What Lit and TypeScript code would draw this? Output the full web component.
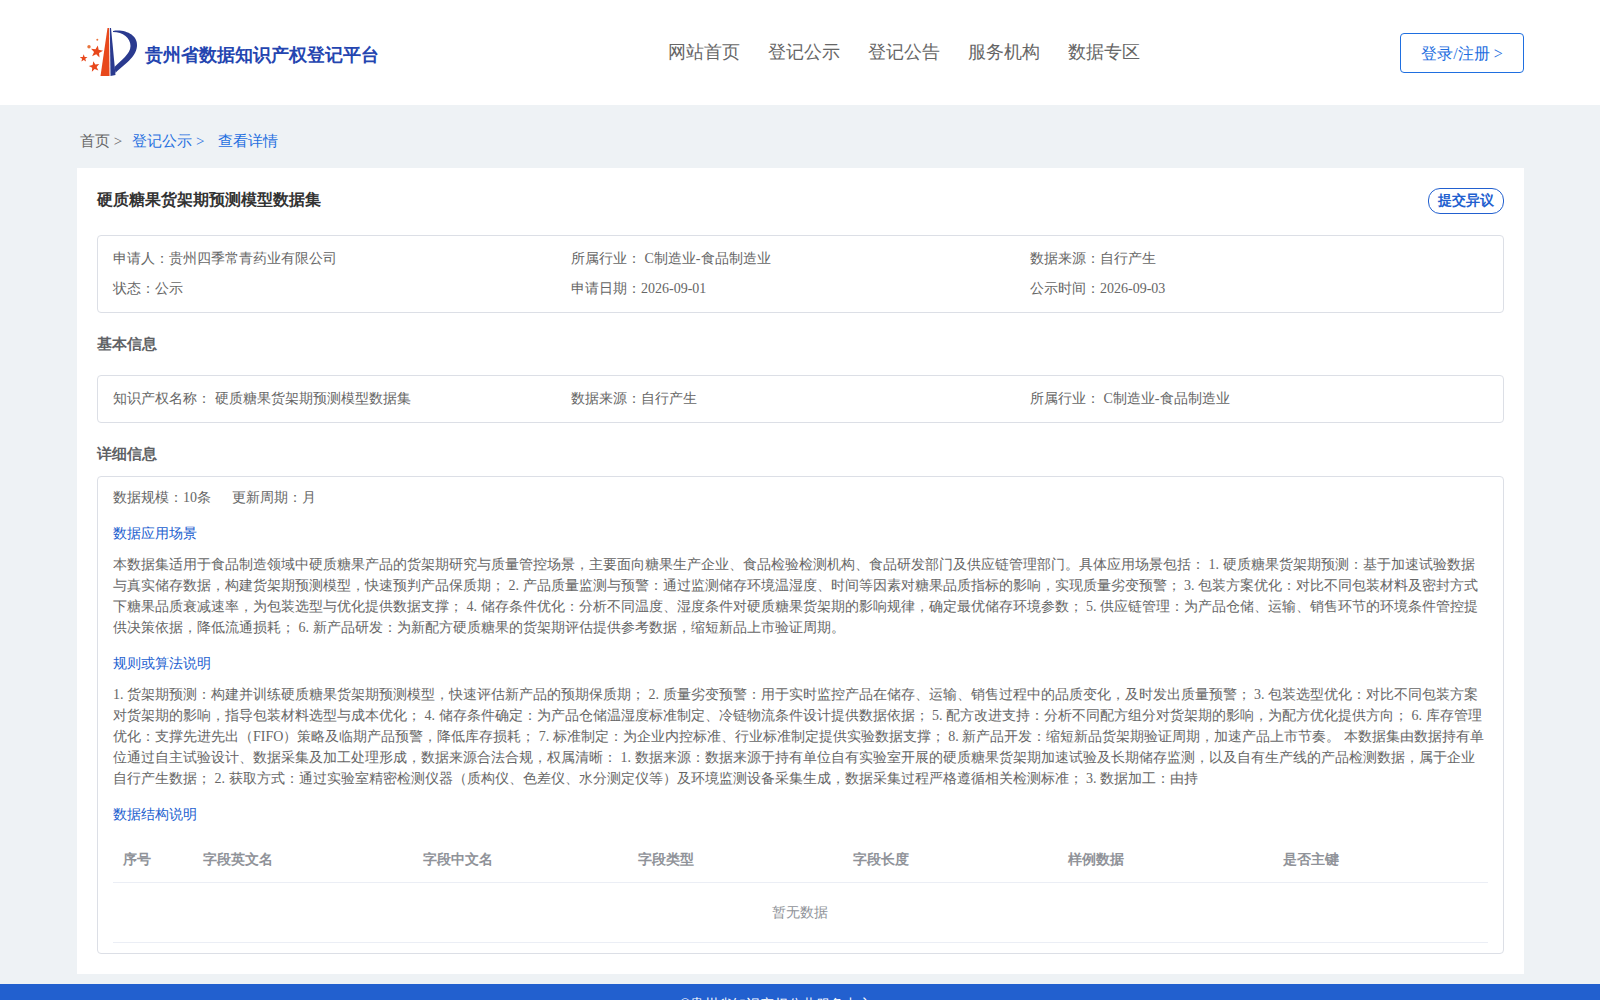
import { LitElement, html, css, svg } from "lit";
import { customElement } from "lit/decorators.js";

const P1 = "本数据集适用于食品制造领域中硬质糖果产品的货架期研究与质量管控场景，主要面向糖果生产企业、食品检验检测机构、食品研发部门及供应链管理部门。具体应用场景包括： 1. 硬质糖果货架期预测：基于加速试验数据与真实储存数据，构建货架期预测模型，快速预判产品保质期； 2. 产品质量监测与预警：通过监测储存环境温湿度、时间等因素对糖果品质指标的影响，实现质量劣变预警； 3. 包装方案优化：对比不同包装材料及密封方式下糖果品质衰减速率，为包装选型与优化提供数据支撑； 4. 储存条件优化：分析不同温度、湿度条件对硬质糖果货架期的影响规律，确定最优储存环境参数； 5. 供应链管理：为产品仓储、运输、销售环节的环境条件管控提供决策依据，降低流通损耗； 6. 新产品研发：为新配方硬质糖果的货架期评估提供参考数据，缩短新品上市验证周期。";
const P2 = "1. 货架期预测：构建并训练硬质糖果货架期预测模型，快速评估新产品的预期保质期； 2. 质量劣变预警：用于实时监控产品在储存、运输、销售过程中的品质变化，及时发出质量预警； 3. 包装选型优化：对比不同包装方案对货架期的影响，指导包装材料选型与成本优化； 4. 储存条件确定：为产品仓储温湿度标准制定、冷链物流条件设计提供数据依据； 5. 配方改进支持：分析不同配方组分对货架期的影响，为配方优化提供方向； 6. 库存管理优化：支撑先进先出（FIFO）策略及临期产品预警，降低库存损耗； 7. 标准制定：为企业内控标准、行业标准制定提供实验数据支撑； 8. 新产品开发：缩短新品货架期验证周期，加速产品上市节奏。 本数据集由数据持有单位通过自主试验设计、数据采集及加工处理形成，数据来源合法合规，权属清晰： 1. 数据来源：数据来源于持有单位自有实验室开展的硬质糖果货架期加速试验及长期储存监测，以及自有生产线的产品检测数据，属于企业自行产生数据； 2. 获取方式：通过实验室精密检测仪器（质构仪、色差仪、水分测定仪等）及环境监测设备采集生成，数据采集过程严格遵循相关检测标准； 3. 数据加工：由持";

const COLS = ["序号", "字段英文名", "字段中文名", "字段类型", "字段长度", "样例数据", "是否主键"];

function star(cx: number, cy: number, r: number, rot: number) {
  const pts: string[] = [];
  for (let i = 0; i < 10; i++) {
    const rad = i % 2 === 0 ? r : r * 0.42;
    const a = ((-90 + rot + i * 36) * Math.PI) / 180;
    pts.push(`${(cx + rad * Math.cos(a)).toFixed(2)},${(cy + rad * Math.sin(a)).toFixed(2)}`);
  }
  return svg`<polygon points=${pts.join(" ")} fill="#e8481c"></polygon>`;
}

@customElement("app-root")
export class AppRoot extends LitElement {
  static styles = css`
    :host {
      display: block;
      height: 1000px;
      overflow: hidden;
      background: #eef2f5;
      font-family: "Liberation Serif", serif;
      font-size: 14px;
      color: #666;
    }
    .top {
      height: 105px;
      background: #fff;
      display: grid;
      grid-template-columns: 1fr auto 1fr;
      align-items: center;
      padding: 0 76px 0 80px;
    }
    .brand { display: flex; align-items: center; gap: 5px; font-size: 18px; font-weight: 700; color: #2445b0; }
    .brand svg { display: block; }
    .brand span { padding-top: 5px; }
    .nav { display: flex; gap: 28px; font-size: 18px; color: #666; padding-left: 204px; padding-bottom: 2px; }
    .login {
      justify-self: end;
      width: 124px; height: 40px; box-sizing: border-box;
      border: 1px solid #1f6fe0; border-radius: 4px;
      color: #1f6fe0; font-size: 16px; padding-top: 4px;
      display: flex; align-items: center; justify-content: center;
    }
    .crumbs { height: 63px; padding: 10px 80px 0; display: flex; align-items: center; gap: 10px; font-size: 15px; box-sizing: border-box; }
    .crumbs .blue { color: #1f6fe0; }
    .crumbs .last { margin-left: 4px; }
    .card { margin: 0 76px 0 77px; background: #fff; padding: 20px 20px 0; height: 806px; box-sizing: border-box; }
    .head { display: flex; justify-content: space-between; align-items: flex-start; height: 47px; }
    .title { font-size: 16px; font-weight: 700; color: #333; line-height: 23px; }
    .object {
      box-sizing: border-box; width: 76px; height: 26px;
      border: 1px solid #2260cf; border-radius: 12px;
      font-size: 14px; font-weight: 700; color: #2260cf;
      display: flex; align-items: center; justify-content: center;
    }
    .box { border: 1px solid #dcdfe6; border-radius: 4px; box-sizing: border-box; }
    .grid { display: grid; grid-template-columns: 458px 459px 458px; padding: 12px 15px; row-gap: 8px; line-height: 22px; }
    .sec { font-size: 15px; font-weight: 700; color: #606266; display: flex; align-items: center; }
    .sec1 { height: 62px; }
    .sec2 { height: 53px; padding-top: 9px; box-sizing: border-box; }
    .detail { height: 478px; padding: 0 15px; overflow: hidden; }
    .meta { display: flex; gap: 21px; height: 41px; line-height: 41px; margin-bottom: 4px; }
    .sub { color: #2260cf; line-height: 24px; margin: 0; }
    .para { line-height: 21px; margin: 8px 0 0; }
    .gap { margin-top: 14px; }
    .table { margin-top: 9px; }
    .thead { display: grid; grid-template-columns: 79.5px 220px 215px 215px 215px 215px 1fr; height: 47px; padding-top: 1px; align-items: center; border-bottom: 1px solid #ebeef5; font-weight: 700; color: #909399; box-sizing: border-box; }
    .thead span { padding-left: 10px; }
    .empty { height: 60px; padding-right: 2px; display: flex; align-items: center; justify-content: center; color: #909399; border-bottom: 1px solid #ebeef5; box-sizing: border-box; }
    .foot { margin-top: 10px; height: 40px; background: #2260cf; color: #fff; text-align: center; font-size: 14px; padding: 12px 48px 0 0; box-sizing: border-box; }
  `;

  render() {
    return html`
      <div class="top">
        <div class="brand">
          <svg width="60" height="52" viewBox="0 0 60 52">
            <path d="M27.5 1 L29 1 L29.5 49 L20.5 49 Z" fill="#e8481c"/>
            <path d="M29.8 1 L31 1 L35.5 48 L30.5 49 Z" fill="#2a3a8f"/>
            <path d="M33 4 C45 2 58 8 57 19 C56 31 44 37 35.5 46 L34.5 40 C41 33 50.5 27 50.5 19 C50.5 11 43 5 33 5 Z" fill="#2a3a8f"/>
            ${star(16.7, 24.7, 6.4, 10)}
            ${star(14.3, 39.7, 5.6, -10)}
            ${star(3.7, 31.3, 4, 0)}
            <circle cx="9" cy="19.7" r="1.7" fill="#e8743c"/>
            <circle cx="17.3" cy="12.7" r="1" fill="#e8743c"/>
          </svg>
          <span>贵州省数据知识产权登记平台</span>
        </div>
        <div class="nav">
          <span>网站首页</span><span>登记公示</span><span>登记公告</span><span>服务机构</span><span>数据专区</span>
        </div>
        <div class="login">登录/注册 &gt;</div>
      </div>
      <div class="crumbs">
        <span>首页 &gt;</span><span class="blue">登记公示 &gt;</span><span class="blue last">查看详情</span>
      </div>
      <div class="card">
        <div class="head">
          <div class="title">硬质糖果货架期预测模型数据集</div>
          <div class="object">提交异议</div>
        </div>
        <div class="box grid">
          <span>申请人：贵州四季常青药业有限公司</span><span>所属行业： C制造业-食品制造业</span><span>数据来源：自行产生</span>
          <span>状态：公示</span><span>申请日期：2026-09-01</span><span>公示时间：2026-09-03</span>
        </div>
        <div class="sec sec1">基本信息</div>
        <div class="box grid">
          <span>知识产权名称： 硬质糖果货架期预测模型数据集</span><span>数据来源：自行产生</span><span>所属行业： C制造业-食品制造业</span>
        </div>
        <div class="sec sec2">详细信息</div>
        <div class="box detail">
          <div class="meta"><span>数据规模：10条</span><span>更新周期：月</span></div>
          <p class="sub">数据应用场景</p>
          <p class="para">${P1}</p>
          <p class="sub gap">规则或算法说明</p>
          <p class="para">${P2}</p>
          <p class="sub gap">数据结构说明</p>
          <div class="table">
            <div class="thead">${COLS.map((c) => html`<span>${c}</span>`)}</div>
            <div class="empty">暂无数据</div>
          </div>
        </div>
      </div>
      <div class="foot">©贵州省知识产权公共服务中心</div>
    `;
  }
}
